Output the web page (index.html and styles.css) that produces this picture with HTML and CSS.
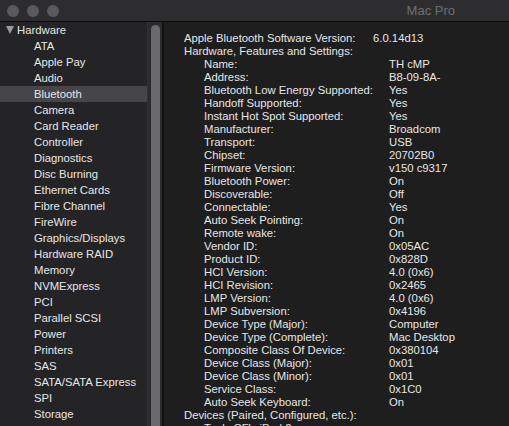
FILE: index.html
```html
<!DOCTYPE html>
<html>
<head>
<meta charset="utf-8">
<link rel="stylesheet" href="styles.css">
</head>
<body>
<div class="window">
  <div class="titlebar">
    <div class="lights"><span class="light"></span><span class="light"></span><span class="light"></span></div>
    <div class="title">Mac Pro</div>
  </div>
  <div class="main">
    <div class="sidebar">
      <div class="group"><span class="tri"></span>Hardware</div>
      <div class="item">ATA</div>
      <div class="item">Apple Pay</div>
      <div class="item">Audio</div>
      <div class="item sel">Bluetooth</div>
      <div class="item">Camera</div>
      <div class="item">Card Reader</div>
      <div class="item">Controller</div>
      <div class="item">Diagnostics</div>
      <div class="item">Disc Burning</div>
      <div class="item">Ethernet Cards</div>
      <div class="item">Fibre Channel</div>
      <div class="item">FireWire</div>
      <div class="item">Graphics/Displays</div>
      <div class="item">Hardware RAID</div>
      <div class="item">Memory</div>
      <div class="item">NVMExpress</div>
      <div class="item">PCI</div>
      <div class="item">Parallel SCSI</div>
      <div class="item">Power</div>
      <div class="item">Printers</div>
      <div class="item">SAS</div>
      <div class="item">SATA/SATA Express</div>
      <div class="item">SPI</div>
      <div class="item">Storage</div>
      <div class="item">Thunderbolt</div>
    </div>
    <div class="scroll"><div class="thumb"></div></div>
    <div class="divider"></div>
    <div class="content">
      <div class="row top"><span class="k0">Apple Bluetooth Software Version:</span><span>6.0.14d13</span></div>
      <div class="row top"><span>Hardware, Features and Settings:</span></div>
      <div class="row"><span class="k">Name:</span><span>TH cMP</span></div>
      <div class="row"><span class="k">Address:</span><span>B8-09-8A-</span></div>
      <div class="row"><span class="k">Bluetooth Low Energy Supported:</span><span>Yes</span></div>
      <div class="row"><span class="k">Handoff Supported:</span><span>Yes</span></div>
      <div class="row"><span class="k">Instant Hot Spot Supported:</span><span>Yes</span></div>
      <div class="row"><span class="k">Manufacturer:</span><span>Broadcom</span></div>
      <div class="row"><span class="k">Transport:</span><span>USB</span></div>
      <div class="row"><span class="k">Chipset:</span><span>20702B0</span></div>
      <div class="row"><span class="k">Firmware Version:</span><span>v150 c9317</span></div>
      <div class="row"><span class="k">Bluetooth Power:</span><span>On</span></div>
      <div class="row"><span class="k">Discoverable:</span><span>Off</span></div>
      <div class="row"><span class="k">Connectable:</span><span>Yes</span></div>
      <div class="row"><span class="k">Auto Seek Pointing:</span><span>On</span></div>
      <div class="row"><span class="k">Remote wake:</span><span>On</span></div>
      <div class="row"><span class="k">Vendor ID:</span><span>0x05AC</span></div>
      <div class="row"><span class="k">Product ID:</span><span>0x828D</span></div>
      <div class="row"><span class="k">HCI Version:</span><span>4.0 (0x6)</span></div>
      <div class="row"><span class="k">HCI Revision:</span><span>0x2465</span></div>
      <div class="row"><span class="k">LMP Version:</span><span>4.0 (0x6)</span></div>
      <div class="row"><span class="k">LMP Subversion:</span><span>0x4196</span></div>
      <div class="row"><span class="k">Device Type (Major):</span><span>Computer</span></div>
      <div class="row"><span class="k">Device Type (Complete):</span><span>Mac Desktop</span></div>
      <div class="row"><span class="k">Composite Class Of Device:</span><span>0x380104</span></div>
      <div class="row"><span class="k">Device Class (Major):</span><span>0x01</span></div>
      <div class="row"><span class="k">Device Class (Minor):</span><span>0x01</span></div>
      <div class="row"><span class="k">Service Class:</span><span>0x1C0</span></div>
      <div class="row"><span class="k">Auto Seek Keyboard:</span><span>On</span></div>
      <div class="row top"><span>Devices (Paired, Configured, etc.):</span></div>
      <div class="row"><span class="k">Tools CF's iPad 2:</span><span></span></div>
    </div>
  </div>
</div>
</body>
</html>
```

FILE: styles.css
```css
html, body {
  margin: 0;
  padding: 0;
  background: #1e1e1e;
  overflow: hidden;
}
.window {
  width: 509px;
  height: 426px;
  display: flex;
  flex-direction: column;
  font-family: "Liberation Sans", Arial, sans-serif;
  font-size: 11.3px;
  color: #e6e6e6;
  overflow: hidden;
}
.titlebar {
  height: 21px;
  flex: none;
  background: #2d2d2f;
  border-bottom: 1px solid #0c0c0c;
  display: flex;
  align-items: center;
  position: relative;
}
.lights {
  display: flex;
  gap: 8px;
  padding-left: 7px;
}
.light {
  width: 12px;
  height: 12px;
  border-radius: 50%;
  background: #5a5a5c;
}
.title {
  margin-left: auto;
  margin-right: 54px;
  color: #6f6f71;
  font-size: 13px;
}
.main {
  flex: 1;
  display: flex;
  min-height: 0;
}
.sidebar {
  width: 147px;
  flex: none;
  background: #242427;
  overflow: hidden;
}
.group, .item {
  height: 16px;
  line-height: 16px;
  white-space: nowrap;
}
.group {
  padding-left: 6px;
  display: flex;
  align-items: center;
}
.tri {
  width: 0;
  height: 0;
  border-left: 4.5px solid transparent;
  border-right: 4.5px solid transparent;
  border-top: 8px solid #9a9a9c;
  margin-right: 3px;
}
.item {
  padding-left: 34px;
}
.item.sel {
  background: #464648;
}
.scroll {
  width: 15px;
  flex: none;
  background: #2b2b2d;
  border-left: 1px solid #333336;
  box-sizing: border-box;
  padding: 3px 2px 0 3px;
}
.thumb {
  height: 420px;
  border-radius: 5px;
  background: #6a6a6c;
}
.divider {
  width: 2px;
  flex: none;
  background: #111112;
}
.content {
  flex: 1;
  background: #1e1e1e;
  padding: 10px 0 0 20px;
  overflow: hidden;
}
.row {
  height: 13px;
  line-height: 13px;
  white-space: nowrap;
  display: flex;
}
.row .k0 {
  width: 189px;
}
.row .k {
  width: 185px;
  padding-left: 20px;
}
```
